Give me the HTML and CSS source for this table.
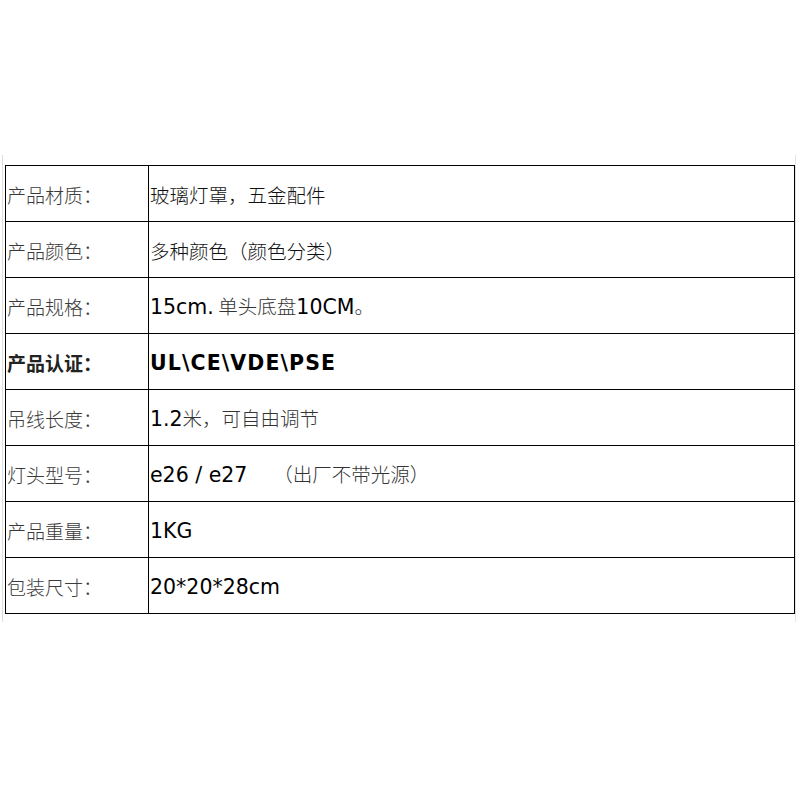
FILE: index.html
```html
<!DOCTYPE html>
<html lang="zh-CN">
<head>
<meta charset="utf-8">
<title>产品参数</title>
<link rel="stylesheet" href="styles.css">
</head>
<body>
<div class="frame">
  <table class="spec">
    <tr><td class="label">产品材质：</td><td class="value cjk">玻璃灯罩，五金配件</td></tr>
    <tr><td class="label">产品颜色：</td><td class="value cjk">多种颜色（颜色分类）</td></tr>
    <tr><td class="label">产品规格：</td><td class="value"><span class="lat">15cm.</span> <span class="cjk">单头底盘</span><span class="lat">10CM</span><span class="cjk">。</span></td></tr>
    <tr class="strong"><td class="label">产品认证：</td><td class="value"><span class="lat">UL\CE\VDE\PSE</span></td></tr>
    <tr><td class="label">吊线长度：</td><td class="value"><span class="lat">1.2</span><span class="cjk">米，可自由调节</span></td></tr>
    <tr><td class="label">灯头型号：</td><td class="value"><span class="lat">e26 / e27</span><span class="cjk note">（出厂不带光源）</span></td></tr>
    <tr><td class="label">产品重量：</td><td class="value"><span class="lat">1KG</span></td></tr>
    <tr><td class="label">包装尺寸：</td><td class="value"><span class="lat">20*20*28cm</span></td></tr>
  </table>
</div>
</body>
</html>
```

FILE: styles.css
```css
html, body {
  margin: 0;
  padding: 0;
  background: #ffffff;
}

.frame {
  margin-left: 2px;
  width: 794px;
  border-left: 1px solid #dcdcdc;
  border-right: 1px solid #e4e4e4;
  padding: 10px 0 8px 2px;
  margin-top: 155px;
  box-sizing: border-box;
}

.spec {
  border-collapse: collapse;
  width: 790px;
  table-layout: fixed;
  font-family: "Noto Sans CJK SC", sans-serif;
  font-size: 20px;
}

.spec td {
  border: 1px solid #000;
  height: 53px;
  padding: 2px 0 0 1px;
  vertical-align: middle;
  line-height: 24px;
  white-space: nowrap;
}

.spec .label {
  width: 141px;
  color: #3a3a3a;
  font-weight: 300;
  font-size: 19px;
}

.spec .value {
  color: #111;
}

.cjk {
  font-family: "Noto Sans CJK SC", sans-serif;
  font-weight: 300;
  color: #333;
  font-size: 19.5px;
}

.lat {
  font-family: "DejaVu Sans", "Liberation Sans", sans-serif;
  font-size: 20.5px;
  color: #000;
}

.note {
  margin-left: 26px;
}

.strong .label {
  font-weight: 700;
  color: #222;
}

.strong .lat {
  font-weight: 700;
  letter-spacing: 1.1px;
}
```
